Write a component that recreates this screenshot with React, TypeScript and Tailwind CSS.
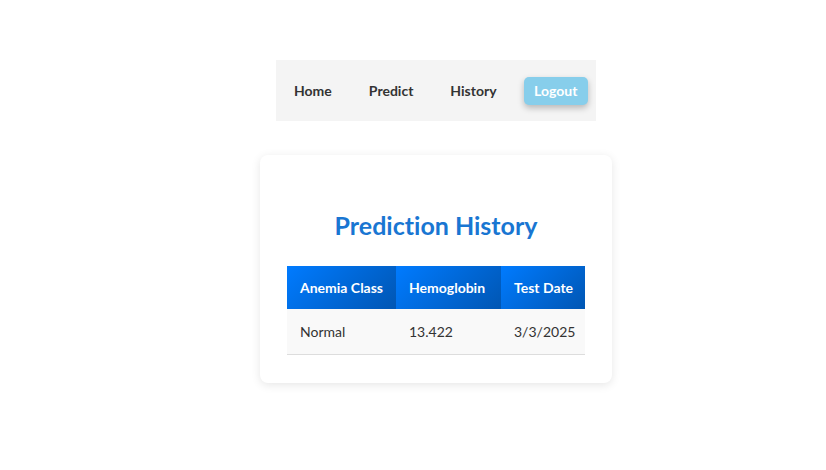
export default function App() {
  const rows = [{ cls: "Normal", hb: "13.422", date: "3/3/2025" }];

  return (
    <div className="min-h-[470px] bg-white pl-[46px] pt-[60px] flex flex-col items-center font-['Lato',sans-serif] [font-variant-ligatures:none]">
      <nav className="w-[320px] h-[61px] bg-[#f4f4f4] flex items-center pl-[8px] pr-[8px] gap-[17px]">
        <a className="px-[10px] text-[14px] font-bold text-[#333]">Home</a>
        <a className="px-[10px] text-[14px] font-bold text-[#333]">Predict</a>
        <a className="px-[10px] text-[14px] font-bold text-[#333]">History</a>
        <button className="ml-auto w-[65px] h-[28px] rounded-[5px] bg-[#87ceeb] text-white text-[14px] font-bold shadow-[0_3px_6px_rgba(0,0,0,0.25)]">
          Logout
        </button>
      </nav>

      <div className="mt-[34px] w-[352px] bg-white rounded-[8px] shadow-[0_2px_10px_rgba(0,0,0,0.1)] px-[27px] pt-[54px] pb-[28px]">
        <h2 className="text-center text-[25px] leading-[32px] font-bold text-[#1976d2]">
          Prediction History
        </h2>
        <table className="mt-[25px] w-full table-fixed border-collapse text-[14px]">
          <thead>
            <tr>
              <th className="w-[109px] h-[43px] px-[13px] text-left font-bold text-white whitespace-nowrap bg-[linear-gradient(135deg,#007bff,#0056b3)]">
                Anemia Class
              </th>
              <th className="w-[105px] h-[43px] px-[13px] text-left font-bold text-white whitespace-nowrap bg-[linear-gradient(135deg,#007bff,#0056b3)]">
                Hemoglobin
              </th>
              <th className="h-[43px] px-[13px] text-left font-bold text-white whitespace-nowrap bg-[linear-gradient(135deg,#007bff,#0056b3)]">
                Test Date
              </th>
            </tr>
          </thead>
          <tbody>
            {rows.map((r, i) => (
              <tr key={i} className="bg-[#f9f9f9] border-b border-[#ddd]">
                <td className="h-[45px] px-[13px] text-[#333] whitespace-nowrap">{r.cls}</td>
                <td className="h-[45px] px-[13px] text-[#333] whitespace-nowrap">{r.hb}</td>
                <td className="h-[45px] px-[13px] text-[#333] whitespace-nowrap">{r.date}</td>
              </tr>
            ))}
          </tbody>
        </table>
      </div>
    </div>
  );
}
